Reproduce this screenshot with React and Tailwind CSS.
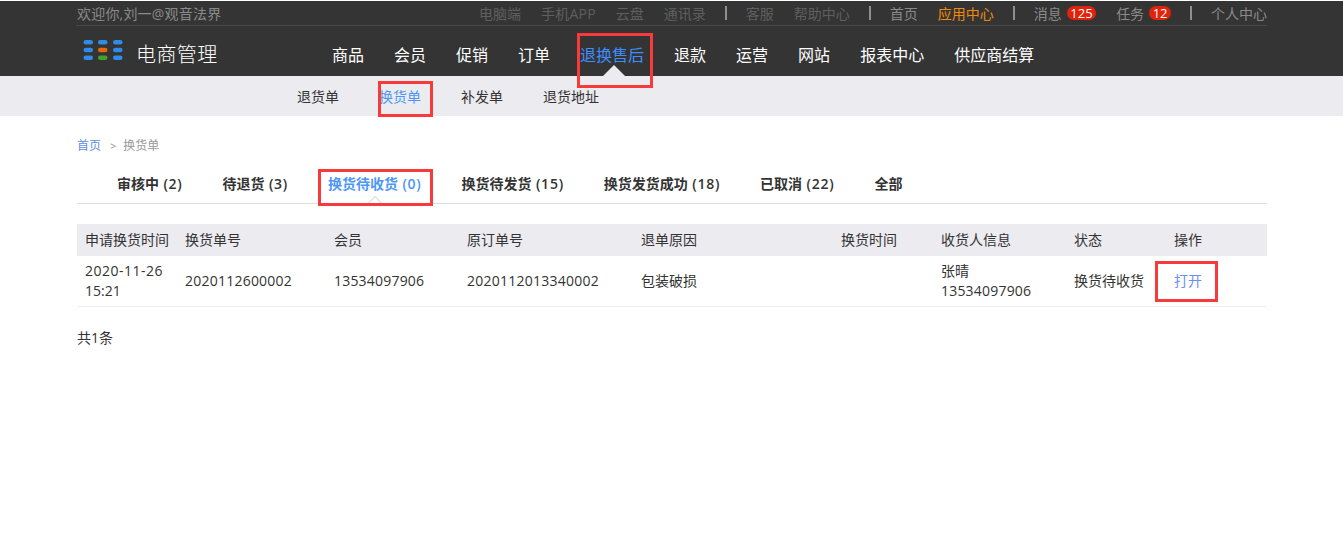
const FONT = "font-['Open_Sans','Noto_Sans_CJK_SC',sans-serif]";

function Sep() {
  return <span className="w-[2px] h-[14px] bg-[#8f8f8f] mx-[-1px]" />;
}

function Badge({ children }) {
  return (
    <span className="ml-[5px] h-[14px] px-[3.5px] rounded-[7px] bg-[#e0230a] text-white text-[13px] leading-[14px] flex items-center">
      {children}
    </span>
  );
}

function TopBar() {
  return (
    <div className="h-[25px] mx-[76px] pl-px border-b border-[#484848] flex items-center justify-between text-[14px] leading-[25px] text-[#8a8a8a]">
      <span className="tracking-[0.2px]">欢迎你,刘一@观音法界</span>
      <div className="flex items-center gap-[20px]">
        <span className="text-[#5f5f5f]">电脑端</span>
        <span className="text-[#5f5f5f] tracking-[0.2px]">手机APP</span>
        <span className="text-[#5f5f5f]">云盘</span>
        <span className="text-[#5f5f5f]">通讯录</span>
        <Sep />
        <span className="text-[#5f5f5f]">客服</span>
        <span className="text-[#5f5f5f]">帮助中心</span>
        <Sep />
        <span>首页</span>
        <span className="text-[#f08a0c]">应用中心</span>
        <Sep />
        <span className="flex items-center">消息<Badge>125</Badge></span>
        <span className="flex items-center">任务<Badge>12</Badge></span>
        <Sep />
        <span>个人中心</span>
      </div>
    </div>
  );
}

function Logo() {
  const xs = [83.5, 98, 113];
  const ys = [40, 47.7, 55.5];
  const colour = (r, c) => (r === 1 && c === 1 ? "#e8650f" : r === 2 && c === 1 ? "#3fa32b" : "#2f8ce8");
  return (
    <svg width="40" height="24" viewBox="83 39 40 24" className="blur-[0.7px] shrink-0">
      {ys.map((y, r) =>
        xs.map((x, c) => <rect key={x + "-" + y} x={x} y={y} width="9.5" height="4.6" rx="2.3" fill={colour(r, c)} />)
      )}
    </svg>
  );
}

const NAV = ["商品", "会员", "促销", "订单", "退换售后", "退款", "运营", "网站", "报表中心", "供应商结算"];

function MainNav() {
  return (
    <div className="h-[50px] flex items-center pl-[83px]">
      <Logo />
      <span className="ml-[13px] mt-[7px] w-[81px] text-[20px] tracking-[0.4px] whitespace-nowrap font-light text-white leading-[28px] shrink-0">电商管理</span>
      <div className="ml-[115px] flex gap-[30px] text-[16px] text-white">
        {NAV.map((n) => (
          <div key={n} className="relative h-[50px] leading-[58px]">
            <span className={n === "退换售后" ? "text-[#3f8dff]" : ""}>{n}</span>
            {n === "退换售后" && (
              <span className="absolute left-[23px] bottom-0 w-0 h-0 border-x-[11px] border-x-transparent border-b-[11px] border-b-[#ecebf0]" />
            )}
          </div>
        ))}
      </div>
    </div>
  );
}

function SubNav() {
  return (
    <div className="h-[40px] bg-[#ecebf0] pl-[297px] flex items-center gap-[40px] text-[14px] text-[#333]">
      <span>退货单</span>
      <span className="text-[#4d96f5]">换货单</span>
      <span>补发单</span>
      <span>退货地址</span>
    </div>
  );
}

const TABS = [
  ["审核中", " (2)", 0],
  ["待退货", " (3)", 0],
  ["换货待收货", " (0)", 1],
  ["换货待发货", " (15)", 0],
  ["换货发货成功", " (18)", 0],
  ["已取消", " (22)", 0],
  ["全部", "", 0],
];

function Tabs() {
  return (
    <div className="mt-[14px] h-[34px] border-b border-[#dddddd] pl-[40px] flex gap-[40px] text-[14px] font-semibold text-[#333] leading-[28px]">
      {TABS.map(([t, num, active]) => (
        <div key={t} className="relative h-[33px] whitespace-pre">
          <span className={active ? "text-[#4d96f5]" : ""}>
            {t}
            <span className="tracking-[0.75px]">{num}</span>
          </span>
          {active ? (
            <span className="absolute left-1/2 bottom-[-5px] w-[10px] h-[10px] -ml-[5px] rotate-45 bg-white border-l border-t border-[#dddddd]" />
          ) : null}
        </div>
      ))}
    </div>
  );
}

const COLS = [100, 149, 133, 174, 200, 100, 133, 100, 101];
const HEAD = ["申请换货时间", "换货单号", "会员", "原订单号", "退单原因", "换货时间", "收货人信息", "状态", "操作"];

function OrderTable() {
  return (
    <table className="mt-[20px] w-[1190px] table-fixed border-collapse text-[14px] text-[#333]">
      <colgroup>
        {COLS.map((w, i) => <col key={i} style={{ width: w }} />)}
      </colgroup>
      <thead>
        <tr className="bg-[#ecebf0] h-[32px]">
          {HEAD.map((h) => (
            <th key={h} className="px-[8px] pb-[2px] text-left font-normal whitespace-nowrap">{h}</th>
          ))}
        </tr>
      </thead>
      <tbody>
        <tr className="h-[50px] border-b border-[#eeeeee] leading-[20px]">
          <td className="px-[8px]"><span className="tracking-[0.5px]">2020-11-26</span><br />15:21</td>
          <td className="px-[8px] tracking-[0.23px]">2020112600002</td>
          <td className="px-[8px] tracking-[0.2px]">13534097906</td>
          <td className="px-[8px] tracking-[0.25px]">2020112013340002</td>
          <td className="px-[8px]">包装破损</td>
          <td className="px-[8px]" />
          <td className="px-[8px]">张晴<br /><span className="tracking-[0.2px]">13534097906</span></td>
          <td className="px-[8px] whitespace-nowrap">换货待收货</td>
          <td className="px-[8px] text-[#6a8ff5]">打开</td>
        </tr>
      </tbody>
    </table>
  );
}

function Mark({ className }) {
  return <div className={"absolute border-[3px] border-[#f93a3a] pointer-events-none " + className} />;
}

export default function App() {
  return (
    <div className={"relative w-[1343px] h-[543px] overflow-hidden bg-white pt-px " + FONT}>
      <div className="bg-[#343434] h-[75px]">
        <TopBar />
        <MainNav />
      </div>
      <SubNav />
      <div className="mx-[77px] w-[1190px]">
        <div className="mt-[20px] h-[20px] flex items-center text-[12px] leading-[20px] text-[#999]">
          <span className="text-[#5e8fe0]">首页</span>
          <span className="ml-[9px] mr-[7px] text-[11px]">&gt;</span>
          <span>换货单</span>
        </div>
        <Tabs />
        <OrderTable />
        <div className="mt-[21px] text-[14px] leading-[20px] text-[#333]">共1条</div>
      </div>
      <Mark className="left-[577px] top-[33px] w-[76px] h-[55px]" />
      <Mark className="left-[378px] top-[81px] w-[55px] h-[36px]" />
      <Mark className="left-[318px] top-[169px] w-[115px] h-[37px]" />
      <Mark className="left-[1155px] top-[261px] w-[63px] h-[41px]" />
    </div>
  );
}
